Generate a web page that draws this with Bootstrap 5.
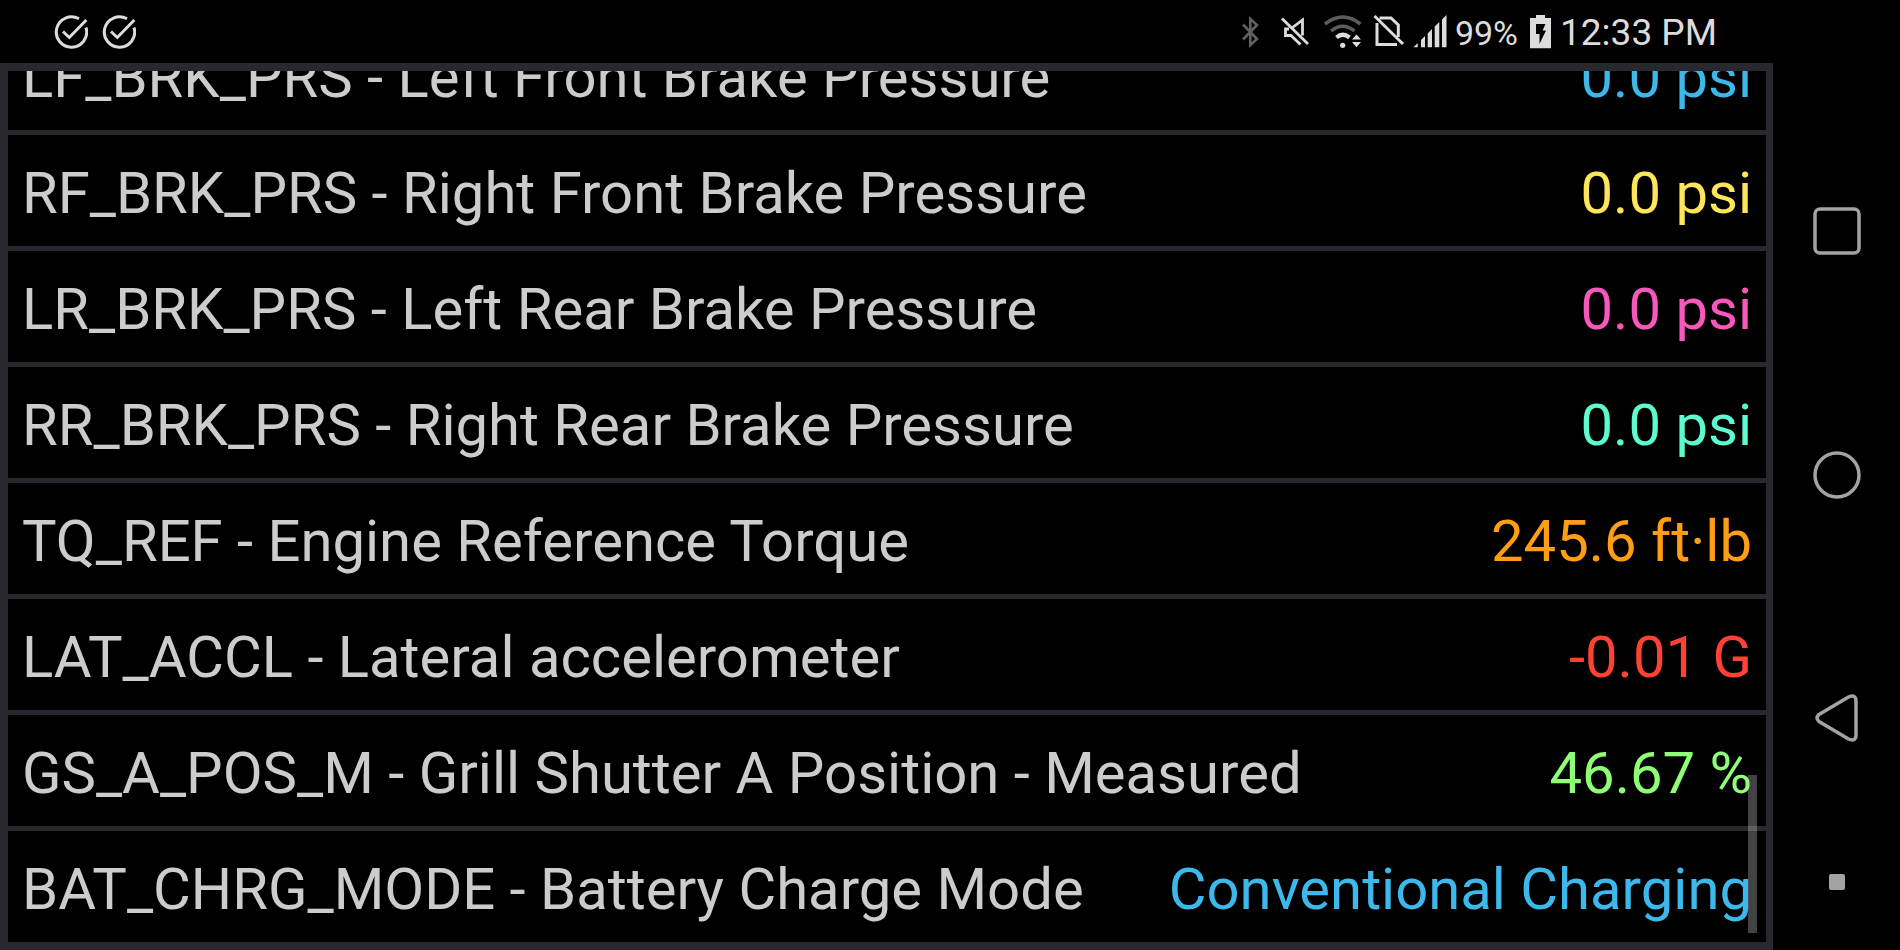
<!DOCTYPE html>
<html lang="en">
<head>
<meta charset="utf-8">
<meta name="viewport" content="width=device-width, initial-scale=1">
<title>Live data</title>
<link rel="stylesheet" href="https://cdn.jsdelivr.net/npm/bootstrap@5.3.0/dist/css/bootstrap.min.css">
<style>
  body { background: #000; color: #ccccce; font-family: Roboto, "Liberation Sans", sans-serif; }
  .status-bar { height: 63px; padding: 0 56px 0 54px; color: #dcdcdc; }
  .status-bar svg { display: block; flex: none; }
  .status-notes { gap: 14px; }
  .status-time, .status-pct { line-height: 42px; padding-top: 3px; }
  .status-time { font-size: 37px; }
  .status-pct { font-size: 34px; }
  .pid-frame { border: 8px solid #28282f; border-right-width: 7px; min-height: 0; }
  .pid-table { font-size: 58px; line-height: 106px; white-space: nowrap; }
  .pid-table tr { border-top: 5px solid #28282f; padding: 5px 14px 0; }
  .pid-table th, .pid-table td { font-weight: 400; padding: 0; }
  .c-blue { color: #3cb8ea; }
  .c-yellow { color: #ffe559; }
  .c-pink { color: #f857bb; }
  .c-mint { color: #5dfbd0; }
  .c-orange { color: #ff9d14; }
  .c-red { color: #ff4136; }
  .c-green { color: #8eff76; }
  .scroll-thumb { right: 9px; bottom: 9px; width: 9px; height: 158px; background: rgba(255, 255, 255, .26); }
  .nav-rail { width: 127px; padding: 109px 0 26px; }
  .nav-rail button { background: none; border: 0; padding: 0; color: #a3a3a3; }
  .nav-rail svg { display: block; margin: 0 auto; }
  .nav-rail .pin-key { height: 84px; }
  .pin-dot { width: 16px; height: 16px; border-radius: 2px; background: #a3a3a3; }
</style>
<script src="https://cdn.jsdelivr.net/npm/bootstrap@5.3.0/dist/js/bootstrap.bundle.min.js"></script>
</head>
<body>
<div class="d-flex vh-100">
  <div class="d-flex flex-column flex-grow-1 overflow-hidden">
    <header class="status-bar d-flex align-items-center justify-content-between flex-shrink-0">
      <div class="status-notes d-flex">
        <svg width="34" height="37" viewBox="0 0 34 37" fill="none" stroke="currentColor" stroke-width="3"><path d="M25 5.800A15.200 15.200 0 1 0 32 14.500M9 18.500l6.300 6L32.300 7"/></svg>
        <svg width="34" height="37" viewBox="0 0 34 37" fill="none" stroke="currentColor" stroke-width="3"><path d="M25 5.800A15.200 15.200 0 1 0 32 14.500M9 18.500l6.300 6L32.300 7"/></svg>
      </div>
      <div class="d-flex align-items-center gap-2">
        <!-- bluetooth -->
        <svg width="32" height="37" viewBox="0 0 32 37" fill="none" stroke="#606060" stroke-width="2.600"><path d="M2 11.500L16 26 9.300 32V6L16 12 2 26.500"/></svg>
        <!-- sound off -->
        <svg width="34" height="37" viewBox="0 0 34 37" fill="none" stroke="currentColor" stroke-width="2.800"><path d="M1 5.500L27 31M11.500 14.500L21.500 7V22.500M8 16H4.500V22.500H10L19.500 31.500"/></svg>
        <!-- wifi -->
        <svg width="42" height="37" viewBox="0 0 42 37" fill="none" stroke-width="3.600"><g stroke="#5c5c5c"><path d="M2 11Q19.700-3 37.500 11M8 18Q19.700 8.500 31.500 18"/></g><path stroke="currentColor" stroke-width="4.200" d="M13.500 24.500Q19.700 19 26.500 24.500"/><g fill="currentColor"><circle cx="19.700" cy="32.300" r="2.600"/><path d="M33.500 21.500L38 26.500H29ZM29 29H38L33.500 34.300Z"/></g></svg>
        <!-- no sim -->
        <svg width="32" height="37" viewBox="0 0 32 37" fill="none" stroke="currentColor" stroke-width="3"><path d="M1.500 3L30 31M6.500 5H18L25.300 12V24M4 10V31.500H24"/></svg>
        <!-- signal strength -->
        <svg width="34" height="37" viewBox="0 0 34 37" fill="currentColor"><path d="M.5 34.300L4.700 30V34.300ZM8 34.300V27L12 23V34.300ZM14.700 34.300V20.500L19 16V34.300ZM21.700 34.300V13.500L26.300 9V34.300ZM29 34.300V6.500L33.500 2V34.300Z"/></svg>
        <span class="status-pct">99%</span>
        <!-- charging battery -->
        <svg class="ms-1" width="22" height="37" viewBox="0 0 22 37" fill="currentColor" fill-rule="evenodd"><path d="M6 2H15V5H21V35.300H0V5H6ZM6 11V21H9.500V31L16 17.500H12.500L15.500 11Z"/></svg>
        <span class="status-time">12:33 PM</span>
      </div>
    </header>
    <main class="pid-frame position-relative flex-grow-1 d-flex flex-column justify-content-end overflow-hidden">
      <table class="pid-table d-block w-100">
        <tbody class="d-block">
          <tr class="d-flex justify-content-between"><th scope="row">LF_BRK_PRS - Left Front Brake Pressure</th><td class="c-blue">0.0 psi</td></tr>
          <tr class="d-flex justify-content-between"><th scope="row">RF_BRK_PRS - Right Front Brake Pressure</th><td class="c-yellow">0.0 psi</td></tr>
          <tr class="d-flex justify-content-between"><th scope="row">LR_BRK_PRS - Left Rear Brake Pressure</th><td class="c-pink">0.0 psi</td></tr>
          <tr class="d-flex justify-content-between"><th scope="row">RR_BRK_PRS - Right Rear Brake Pressure</th><td class="c-mint">0.0 psi</td></tr>
          <tr class="d-flex justify-content-between"><th scope="row">TQ_REF - Engine Reference Torque</th><td class="c-orange">245.6 ft·lb</td></tr>
          <tr class="d-flex justify-content-between"><th scope="row">LAT_ACCL - Lateral accelerometer</th><td class="c-red">-0.01 G</td></tr>
          <tr class="d-flex justify-content-between"><th scope="row">GS_A_POS_M - Grill Shutter A Position - Measured</th><td class="c-green">46.67 %</td></tr>
          <tr class="d-flex justify-content-between"><th scope="row">BAT_CHRG_MODE - Battery Charge Mode</th><td class="c-blue">Conventional Charging</td></tr>
        </tbody>
      </table>
      <div class="scroll-thumb position-absolute"></div>
    </main>
  </div>
  <nav class="nav-rail d-flex flex-column flex-shrink-0" aria-label="System navigation">
    <button type="button" class="flex-fill" aria-label="Recent apps"><svg width="48" height="48" viewBox="0 0 48 48" fill="none" stroke="currentColor" stroke-width="3.500"><rect x="2" y="2" width="44" height="44" rx="5"/></svg></button>
    <button type="button" class="flex-fill" aria-label="Home"><svg width="48" height="48" viewBox="0 0 48 48" fill="none" stroke="currentColor" stroke-width="3.500"><circle cx="24" cy="24" r="22"/></svg></button>
    <button type="button" class="flex-fill" aria-label="Back"><svg width="48" height="48" viewBox="0 0 48 48" fill="none" stroke="currentColor" stroke-width="3.500" stroke-linejoin="round"><path d="M35.500 3L6 20.500Q2 24 6 27.500L35.500 45Q43 48 43 41V7Q43 0 35.500 3Z"/></svg></button>
    <button type="button" class="pin-key d-flex align-items-center justify-content-center" aria-label="Hide navigation bar"><span class="pin-dot"></span></button>
  </nav>
</div>
</body>
</html>
